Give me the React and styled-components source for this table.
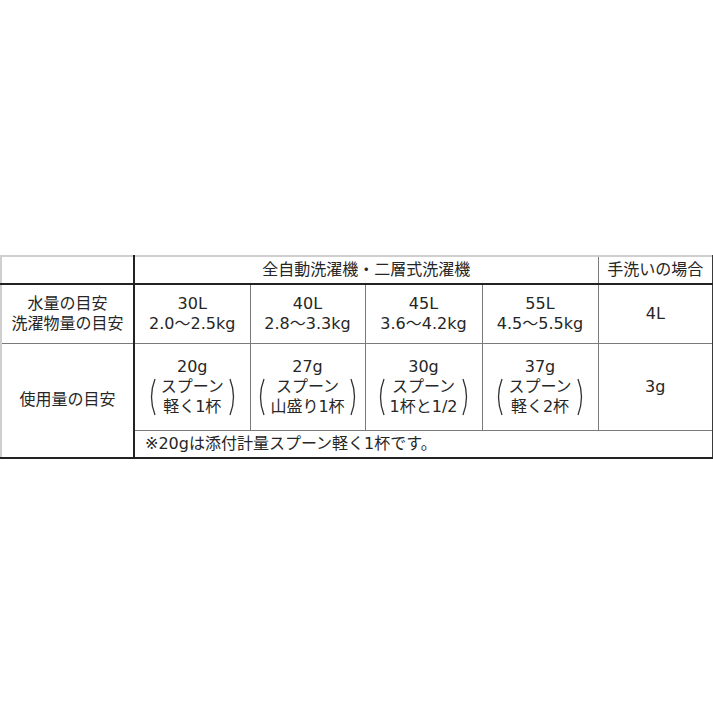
import React from "react";
import styled, { createGlobalStyle } from "styled-components";

const Global = createGlobalStyle`
  html, body { margin: 0; padding: 0; background: #fff; }
  body { font-family: "DejaVu Sans", "Noto Sans CJK JP", sans-serif; color: #262626; }
`;

const Page = styled.div`
  padding-top: 255px;
  width: 713px;
`;

const Table = styled.table`
  border-collapse: collapse;
  table-layout: fixed;
  width: 712px;
  border-top: 2px solid #cfcfcf;
  border-left: 2px solid #cfcfcf;
  border-right: 2px solid #3a3a3a;
  border-bottom: 2px solid #222;
  font-size: 16px;
  line-height: 20px;
`;

const Row = styled.tr`
  height: ${(p) => p.$h}px;
`;

const Cell = styled.td`
  border: 1px solid #7a7a7a;
  ${(p) => p.$head && "border-bottom: 2px solid #222;"}
  ${(p) => p.$label && "border-right: 2px solid #222;"}
  ${(p) => p.$headSep && "border-left: 1px solid #333;"}
  text-align: ${(p) => (p.$left ? "left" : "center")};
  padding: ${(p) => (p.$left ? "0 0 0 10px" : "0")};
  vertical-align: middle;
  white-space: nowrap;
`;

const Dose = styled.div`
  display: flex;
  flex-direction: column;
  align-items: center;
  line-height: 21px;
`;

const Bracketed = styled.div`
  display: flex;
  align-items: center;
  justify-content: center;
  gap: 4px;
`;

const Inner = styled.div`
  display: flex;
  flex-direction: column;
  align-items: center;
  line-height: 20px;
`;

const ParenSvg = styled.svg`
  width: 10px;
  height: 38px;
  flex: none;
`;

const Paren = ({ right }) => (
  <ParenSvg viewBox="0 0 10 38">
    <path
      d={right ? "M2 1 Q9 19 2 37" : "M8 1 Q1 19 8 37"}
      fill="none"
      stroke="#333"
      strokeWidth="1.3"
    />
  </ParenSvg>
);

const doses = [
  ["20g", "スプーン", "軽く1杯"],
  ["27g", "スプーン", "山盛り1杯"],
  ["30g", "スプーン", "1杯と1/2"],
  ["37g", "スプーン", "軽く2杯"],
];

const water = [
  ["30L", "2.0～2.5kg"],
  ["40L", "2.8～3.3kg"],
  ["45L", "3.6～4.2kg"],
  ["55L", "4.5～5.5kg"],
];

export default function App() {
  return (
    <>
      <Global />
      <Page>
        <Table>
          <colgroup>
            <col style={{ width: 133 }} />
            <col style={{ width: 116 }} />
            <col style={{ width: 115 }} />
            <col style={{ width: 117 }} />
            <col style={{ width: 116 }} />
            <col style={{ width: 115 }} />
          </colgroup>
          <tbody>
            <Row $h={28}>
              <Cell $head $label />
              <Cell $head colSpan={4}>全自動洗濯機・二層式洗濯機</Cell>
              <Cell $head $headSep>手洗いの場合</Cell>
            </Row>
            <Row $h={59}>
              <Cell $label>
                水量の目安
                <br />
                洗濯物量の目安
              </Cell>
              {water.map(([a, b]) => (
                <Cell key={a}>
                  {a}
                  <br />
                  {b}
                </Cell>
              ))}
              <Cell>4L</Cell>
            </Row>
            <Row $h={87}>
              <Cell $label rowSpan={2}>使用量の目安</Cell>
              {doses.map(([g, s, n]) => (
                <Cell key={g}>
                  <Dose>
                    <span>{g}</span>
                    <Bracketed>
                      <Paren />
                      <Inner>
                        <span>{s}</span>
                        <span>{n}</span>
                      </Inner>
                      <Paren right />
                    </Bracketed>
                  </Dose>
                </Cell>
              ))}
              <Cell>3g</Cell>
            </Row>
            <Row $h={28}>
              <Cell colSpan={5} $left>
                ※20gは添付計量スプーン軽く1杯です。
              </Cell>
            </Row>
          </tbody>
        </Table>
      </Page>
    </>
  );
}
